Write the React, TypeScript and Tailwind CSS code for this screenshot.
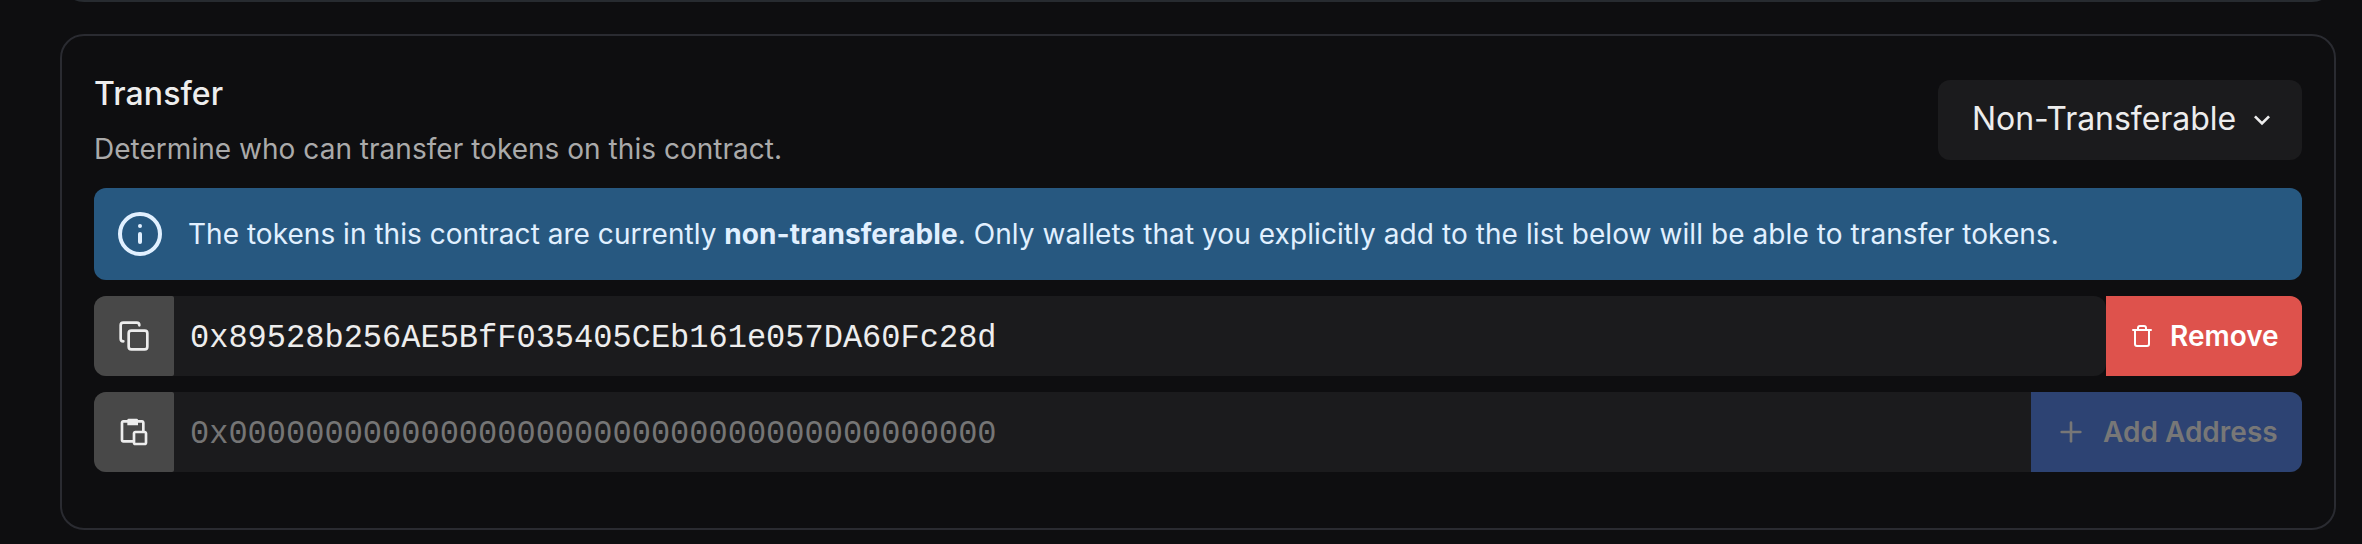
import { Info, Copy, Plus } from "lucide-react";
import { BiPaste } from "react-icons/bi";
import { FiTrash } from "react-icons/fi";

function ChevronDown() {
  return (
    <svg viewBox="0 0 24 24" className="ml-2 size-8" fill="currentColor">
      <path d="M16.59 8.59L12 13.17 7.41 8.59 6 10l6 6 6-6z" />
    </svg>
  );
}

export default function App() {
  return (
    <div className="h-[544px] w-full overflow-hidden bg-[#0e0e10] pl-[60px] pr-[26px] font-['Inter',sans-serif] text-[#ededed]">
      <div className="-mt-12 h-[50px] rounded-[24px] border-2 border-[#272b30]" />
      <section className="mt-8 h-[496px] rounded-[24px] border-2 border-[#2a2b31] px-8 pt-11">
        <div className="flex h-20 items-start justify-between">
          <div>
            <h2 className="mt-[-6px] text-[32px] font-medium leading-[40px] tracking-[0.1px]">Transfer</h2>
            <p className="mt-[14px] text-[28px] leading-[42px] tracking-[0.03px] text-[#aaaaaa]">
              Determine who can transfer tokens on this contract.
            </p>
          </div>
          <button className="flex h-20 w-[364px] items-center rounded-[12px] bg-[#1b1b1d] pl-[34px] text-left text-[32px]">
            <span className="w-[266px] whitespace-nowrap pb-[3px] tracking-[-0.05px]">Non-Transferable</span>
            <ChevronDown />
          </button>
        </div>
        <div className="mt-7 flex h-[92px] items-center rounded-[12px] bg-[#275880] pl-[22px] text-[28px] text-[#e1f0ff]">
          <Info className="size-12" />
          <p className="ml-6 tracking-[0.03px]">
            The tokens in this contract are currently <strong className="font-bold tracking-[0.07px]">non-transferable</strong>
            <span className="tracking-[0.075px]">. Only wallets that you explicitly add to the list below will be able to transfer tokens.</span>
          </p>
        </div>
        <div className="mt-4 flex h-20">
          <div className="flex flex-1 rounded-[12px] bg-[#1b1b1d]">
            <button className="flex w-20 items-center justify-center rounded-l-[12px] rounded-r-[2px] bg-[#484848]">
              <Copy className="size-8" />
            </button>
            <div className="flex flex-1 items-center pl-4 font-['Liberation_Mono',monospace] text-[32px]">
              <span className="scale-y-[1.06] pt-[4px]">0x89528b256AE5BfF035405CEb161e057DA60Fc28d</span>
            </div>
          </div>
          <button className="flex w-[196px] items-center rounded-r-[12px] bg-[#de524c] pb-px pl-6 text-[28px] font-semibold text-white">
            <FiTrash className="size-6" />
            <span className="ml-4">Remove</span>
          </button>
        </div>
        <div className="mt-4 flex h-20 rounded-[12px] bg-[#1b1b1d]">
          <button className="flex w-20 items-center justify-center rounded-l-[12px] rounded-r-[2px] bg-[#484848]">
            <BiPaste className="size-8" />
          </button>
          <div className="flex flex-1 items-center pl-4 font-['Liberation_Mono',monospace] text-[32px] text-[#757575]">
            <span className="scale-y-[1.06] pt-[4px]">0x0000000000000000000000000000000000000000</span>
          </div>
          <button className="flex w-[271px] items-center rounded-r-[12px] bg-[#2d4373] pl-6 text-[28px] font-semibold text-[#777777]">
            <Plus className="size-8" />
            <span className="ml-4">Add Address</span>
          </button>
        </div>
      </section>
    </div>
  );
}
